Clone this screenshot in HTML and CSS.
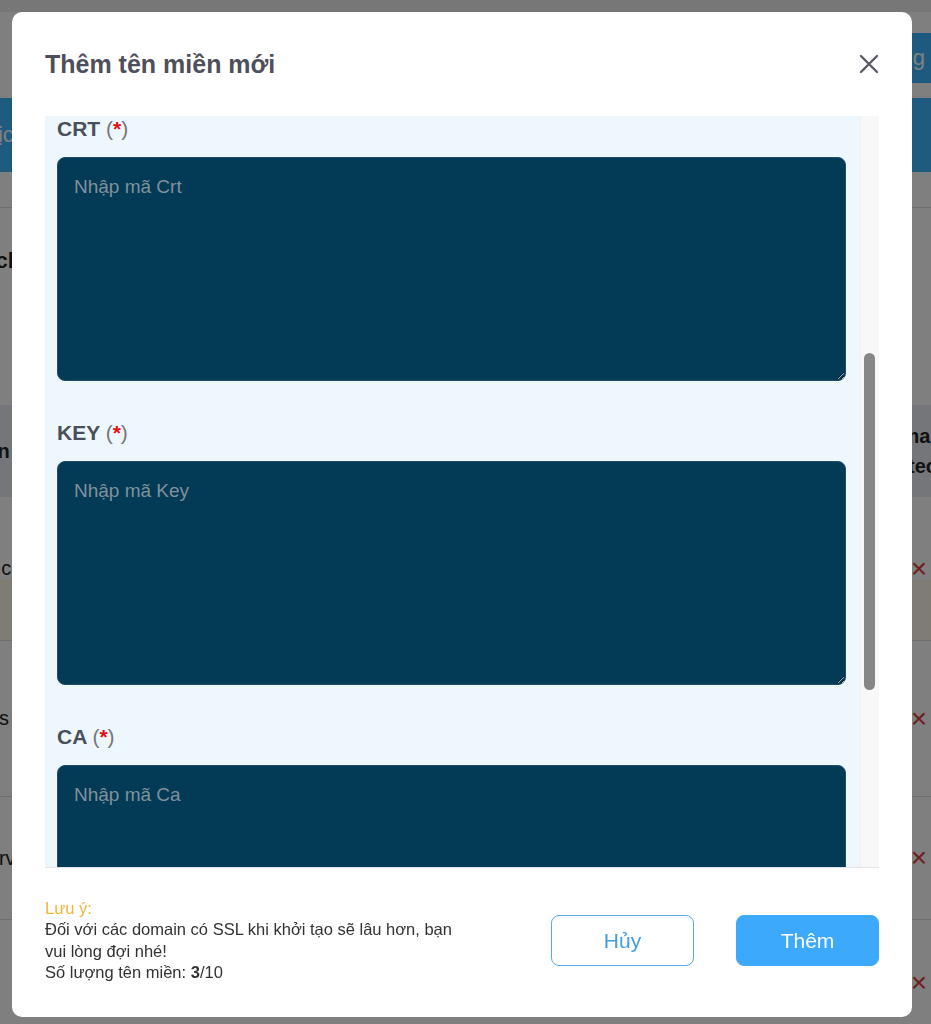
FILE: index.html
```html
<!DOCTYPE html>
<html lang="vi">
<head>
  <meta charset="UTF-8">
  <meta name="viewport" content="width=device-width, initial-scale=1.0">
  <title>Thêm tên miền mới</title>
  <link rel="stylesheet" href="styles.css">
</head>
<body>

<!-- page behind the dialog -->
<div class="page">
  <div class="topbar">
    <span class="top-btn">Tải lại trang</span>
  </div>
  <div class="nav-band">
    <span class="nav-item">Dịch vụ</span>
  </div>
  <div class="page-content">
    <h2 class="page-title">Danh sách</h2>
    <p class="page-note">Tổng số tên miền: 3</p>
    <div class="table-head">
      <span>Tên miền</span>
      <span class="head-right">Domain<br>Protected</span>
    </div>
    <div class="table-row row-a"><span>domain.com</span><span class="remove">&times;</span></div>
    <div class="table-row row-b"><span>business</span><span class="remove">&times;</span></div>
    <div class="table-row row-c"><span>www.serve</span><span class="remove">&times;</span></div>
    <div class="table-row row-d"><span>www.</span><span class="remove">&times;</span></div>
  </div>
</div>

<div class="overlay"></div>

<div class="modal">
  <div class="modal-header">
    <h3>Thêm tên miền mới</h3>
    <button class="close-btn" aria-label="Đóng">
      <svg width="20" height="20" viewBox="0 0 20 20">
        <path d="M2 2 L18 18 M18 2 L2 18" stroke="#5b5b67" stroke-width="2.4" stroke-linecap="round"/>
      </svg>
    </button>
  </div>

  <div class="modal-body">
    <div class="scroll-area" id="scroll-area">
      <div class="form-inner">
        <div class="field">
          <label>Tên miền <span class="req">(<b>*</b>)</span></label>
          <input type="text" placeholder="Nhập tên miền">
        </div>
        <div class="field">
          <label>Thư mục gốc</label>
          <input type="text" placeholder="public_html">
        </div>
        <div class="field">
          <label>Phiên bản PHP</label>
          <input type="text" placeholder="8.1">
        </div>
        <div class="field">
          <label>SSL</label>
          <input type="text" placeholder="Chứng chỉ riêng">
        </div>

        <div class="field">
          <label for="crt">CRT <span class="req">(<b>*</b>)</span></label>
          <textarea id="crt" placeholder="Nhập mã Crt"></textarea>
        </div>
        <div class="field">
          <label for="key">KEY <span class="req">(<b>*</b>)</span></label>
          <textarea id="key" placeholder="Nhập mã Key"></textarea>
        </div>
        <div class="field">
          <label for="ca">CA <span class="req">(<b>*</b>)</span></label>
          <textarea id="ca" placeholder="Nhập mã Ca"></textarea>
        </div>
      </div>
    </div>
    <div class="scroll-track">
      <div class="scroll-thumb"></div>
    </div>
  </div>

  <div class="modal-footer">
    <div class="note">
      <div class="note-title">Lưu ý:</div>
      <div>Đối với các domain có SSL khi khởi tạo sẽ lâu hơn, bạn vui lòng đợi nhé!</div>
      <div>Số lượng tên miền: <b>3</b>/10</div>
    </div>
    <div class="actions">
      <button class="btn btn-outline">Hủy</button>
      <button class="btn btn-primary">Thêm</button>
    </div>
  </div>
</div>

<script src="script.js"></script>
</body>
</html>
```

FILE: styles.css
```css
* {
  box-sizing: border-box;
}
body {
  margin: 0;
  font-family: "Liberation Sans", Arial, sans-serif;
  background-color: #ffffff;
  overflow: hidden;
}

/* background page */
.page {
  height: 1024px;
  overflow: hidden;
  color: #222;
}
.topbar {
  height: 98px;
  display: flex;
  justify-content: flex-end;
  align-items: flex-start;
  padding-top: 21px;
  border-top: 12px solid #eee;
}
.top-btn {
  background: #3cb4ff;
  color: #fff;
  font-size: 22px;
  padding: 12px 6px 12px 20px;
  border-radius: 6px 0 0 6px;
}
.nav-band {
  height: 74px;
  background: #3db6ff;
  color: #fff;
  display: flex;
  align-items: center;
  font-size: 22px;
}
.nav-item {
  margin-left: -18px;
}
.page-content {
  border-top: 35px solid #fff;
}
.page-title {
  margin: 0 0 0 -90px;
  padding-top: 40px;
  height: 90px;
  font-size: 22px;
  border-top: 1px solid #ddd;
}
.page-note {
  margin: 0 0 0 -190px;
  height: 108px;
  padding-top: 46px;
  font-size: 20px;
}
.table-head {
  height: 92px;
  background: #e9edf2;
  display: flex;
  justify-content: space-between;
  align-items: center;
  font-weight: bold;
  font-size: 20px;
  margin-left: -78px;
  margin-right: -36px;
}
.head-right {
  line-height: 30px;
}
.table-row {
  display: flex;
  justify-content: space-between;
  align-items: center;
  font-size: 20px;
  border-bottom: 1px solid #ddd;
  padding-right: 4px;
}
.table-row span:first-child {
  margin-left: -70px;
}
.row-a {
  height: 144px;
  background: linear-gradient(#fff 58%, #fff8e8 58%);
}
.row-b {
  height: 156px;
}
.row-c {
  height: 123px;
}
.row-d {
  height: 126px;
}
.remove {
  color: #e23b3b;
  font-size: 28px;
}
.overlay {
  position: fixed;
  inset: 0;
  background: rgba(0, 0, 0, 0.5);
}

/* dialog */
.modal {
  position: fixed;
  left: 12px;
  top: 12px;
  width: 900px;
  height: 1005px;
  background: #fff;
  border-radius: 10px;
  display: flex;
  flex-direction: column;
}
.modal-header {
  height: 104px;
  flex: none;
  display: flex;
  align-items: center;
  justify-content: space-between;
  padding: 0 33px;
}
.modal-header h3 {
  margin: 0;
  font-size: 25px;
  font-weight: bold;
  color: #4f4f5c;
  padding-top: 1px;
}
.close-btn {
  background: none;
  border: none;
  padding: 0;
  width: 20px;
  height: 20px;
}
.modal-body {
  height: 752px;
  flex: none;
  margin: 0 33px;
  display: flex;
  border-bottom: 1px solid #e1e5ea;
}
.scroll-area {
  flex: 1;
  overflow-y: scroll;
  scrollbar-width: none;
  background: #eef6fe;
}
.scroll-track {
  width: 19px;
  flex: none;
  background: #f8f8f9;
  border-left: 1px solid #f0f0f2;
}
.scroll-thumb {
  margin: 237px 0 0 3px;
  width: 11px;
  height: 337px;
  border-radius: 6px;
  background: #878787;
}
.form-inner {
  padding: 32px 14px 60px 12px;
}
.field {
  margin-bottom: 38px;
}
.field label {
  display: block;
  height: 28px;
  line-height: 28px;
  margin-bottom: 14px;
  font-size: 21px;
  font-weight: bold;
  color: #4b4f5a;
}
.req {
  font-weight: normal;
  color: #777;
}
.req b {
  color: #e01010;
  font-weight: bold;
}
.field input {
  width: 100%;
  height: 44px;
  padding: 0 16px;
  border: 1px solid #ccd;
  border-radius: 8px;
  font-size: 18px;
  font-family: inherit;
}
.field textarea {
  display: block;
  width: 100%;
  height: 224px;
  padding: 18px 16px;
  background: #033a56;
  border: 1px solid #1f4f69;
  border-radius: 8px;
  color: #fff;
  font-size: 19px;
  font-family: inherit;
  resize: vertical;
  outline: none;
}
.field textarea::placeholder {
  color: #80919c;
}

.modal-footer {
  flex: 1;
  display: flex;
  justify-content: space-between;
  align-items: center;
  padding: 0 33px 4px 33px;
}
.note {
  width: 415px;
  font-size: 16.5px;
  line-height: 21.5px;
  color: #333;
}
.note-title {
  color: #efb43a;
}
.actions {
  display: flex;
  gap: 42px;
}
.btn {
  width: 143px;
  height: 51px;
  border-radius: 8px;
  font-size: 21px;
  font-family: inherit;
}
.btn-outline {
  background: #fff;
  border: 1.5px solid #56acea;
  color: #3d9fe6;
}
.btn-primary {
  background: #3da9fc;
  border: 1.5px solid #3da9fc;
  color: #fff;
}
```

FILE: script.js
```js
// keep the dialog body scrolled down to the certificate fields
document.getElementById("scroll-area").scrollTop = 529;
```
